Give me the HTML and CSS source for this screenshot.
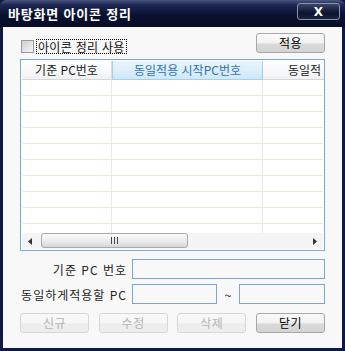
FILE: index.html
```html
<!DOCTYPE html>
<html lang="ko">
<head>
  <meta charset="UTF-8">
  <title>바탕화면 아이콘 정리</title>
  <link rel="stylesheet" href="styles.css">
</head>
<body>
  <div class="window">
    <div class="titlebar">
      <span class="title">바탕화면 아이콘 정리</span>
      <button class="close">X</button>
    </div>

    <div class="client">
      <div class="top-row">
        <label class="check">
          <span class="box"></span>
          <span class="check-text">아이콘 정리 사용</span>
        </label>
        <button class="btn">적용</button>
      </div>

      <div class="list">
        <div class="list-head">
          <div class="col c1">기준 PC번호</div>
          <div class="col c2 active">동일적용 시작PC번호</div>
          <div class="col c3">동일적</div>
        </div>
        <div class="list-body">
          <div class="row"><div class="cell c1"></div><div class="cell c2"></div><div class="cell c3"></div></div>
          <div class="row"><div class="cell c1"></div><div class="cell c2"></div><div class="cell c3"></div></div>
          <div class="row"><div class="cell c1"></div><div class="cell c2"></div><div class="cell c3"></div></div>
          <div class="row"><div class="cell c1"></div><div class="cell c2"></div><div class="cell c3"></div></div>
          <div class="row"><div class="cell c1"></div><div class="cell c2"></div><div class="cell c3"></div></div>
          <div class="row"><div class="cell c1"></div><div class="cell c2"></div><div class="cell c3"></div></div>
          <div class="row"><div class="cell c1"></div><div class="cell c2"></div><div class="cell c3"></div></div>
          <div class="row"><div class="cell c1"></div><div class="cell c2"></div><div class="cell c3"></div></div>
          <div class="row"><div class="cell c1"></div><div class="cell c2"></div><div class="cell c3"></div></div>
          <div class="row"><div class="cell c1"></div><div class="cell c2"></div><div class="cell c3"></div></div>
        </div>
        <div class="hscroll">
          <div class="arrow">
            <svg width="4" height="7" viewBox="0 0 4 7"><path d="M4 0 L0 3.5 L4 7 Z" fill="#333"/></svg>
          </div>
          <div class="track">
            <div class="thumb">
              <svg width="7" height="7" viewBox="0 0 7 7"><path d="M0.5 0 V7 M3.5 0 V7 M6.5 0 V7" stroke="#444" stroke-width="1"/></svg>
            </div>
          </div>
          <div class="arrow">
            <svg width="4" height="7" viewBox="0 0 4 7"><path d="M0 0 L4 3.5 L0 7 Z" fill="#333"/></svg>
          </div>
        </div>
      </div>

      <div class="form-row">
        <span class="label">기준 PC 번호</span>
        <input class="field wide" type="text">
      </div>
      <div class="form-row">
        <span class="label">동일하게적용할 PC</span>
        <input class="field half" type="text">
        <span class="tilde">~</span>
        <input class="field half2" type="text">
      </div>

      <div class="buttons">
        <button class="btn" disabled>신규</button>
        <button class="btn" disabled>수정</button>
        <button class="btn" disabled>삭제</button>
        <button class="btn">닫기</button>
      </div>
    </div>
  </div>
</body>
</html>
```

FILE: styles.css
```css
body {
  margin: 0;
  font-family: "Noto Sans CJK KR", "Noto Sans", sans-serif;
  font-size: 12px;
  color: #111;
}
.window {
  width: 345px;
  height: 351px;
  box-sizing: border-box;
  background-color: #0e1842;
  padding: 0 3px 3px;
  display: flex;
  flex-direction: column;
}
.titlebar {
  height: 27px;
  margin: 0 -3px;
  padding: 0 5px 0 8px;
  display: flex;
  justify-content: space-between;
  align-items: flex-start;
  background: linear-gradient(#4a5780 0, #1c2754 18%, #0a1232 55%, #060c24 100%);
  border-radius: 6px 6px 0 0;
}
.title {
  color: #fff;
  font-weight: bold;
  font-size: 13px;
  line-height: 27px;
  letter-spacing: 0.8px;
}
.close {
  margin-top: 3px;
  width: 43px;
  height: 17px;
  padding: 0;
  border: 1px solid #8a93ad;
  border-radius: 3px;
  background: linear-gradient(#3a4566, #0d1430 60%, #1a2344);
  color: #fff;
  font-family: "DejaVu Sans", sans-serif;
  font-weight: bold;
  font-size: 12px;
  line-height: 14px;
}
.client {
  flex: 1;
  background-color: #f8f8f8;
  padding: 6px 17px 0;
}
.top-row {
  display: flex;
  justify-content: space-between;
  align-items: center;
  height: 20px;
}
.check {
  display: flex;
  align-items: center;
  margin-top: 6px;
}
.box {
  width: 11px;
  height: 11px;
  margin-left: 1px;
  border: 1px solid #9a9a9a;
  background: linear-gradient(135deg, #cfcfcf, #f4f4f4);
}
.check-text {
  margin-left: 2px;
  padding: 0 1px;
  line-height: 13px;
  border: 1px dotted #000;
  letter-spacing: 0.3px;
}
.btn {
  width: 69px;
  height: 20px;
  padding: 0;
  border: 1px solid #a7a7a7;
  border-radius: 3px;
  background: linear-gradient(#fafafa 0, #f2f2f2 50%, #d9d9d9 55%, #d4d4d4 100%);
  font-family: "Noto Sans CJK KR", sans-serif;
  font-size: 12px;
  line-height: 16px;
  color: #000;
  letter-spacing: 0.5px;
}
.btn:disabled {
  border-color: #d6d6d6;
  color: #b4b4b4;
  background: linear-gradient(#f8f8f8 0, #f6f6f6 50%, #ededed 55%, #ededed 100%);
}
.list {
  margin-top: 6px;
  height: 192px;
  box-sizing: border-box;
  border: 1px solid #7aa7d9;
  background: #fff;
  padding: 1px;
  display: flex;
  flex-direction: column;
  overflow: hidden;
}
.list-head,
.row {
  display: flex;
}
.list-head {
  height: 19px;
}
.col {
  box-sizing: border-box;
  height: 19px;
  line-height: 18px;
  text-align: center;
  white-space: nowrap;
  overflow: hidden;
  color: #1a1a1a;
  background: linear-gradient(#ffffff, #f0f1f3);
  border-right: 1px solid #dcdcdc;
  border-bottom: 1px solid #d4d6d9;
}
.col.active {
  color: #2f6fb3;
  background: linear-gradient(#e9f5fd, #cfe8f6);
  border: 1px solid #a5d0ec;
  border-top: none;
}
.c1 { width: 90px; flex: none; }
.c2 { width: 151px; flex: none; }
.c3 { width: 150px; flex: none; }
.col.c3 {
  text-align: left;
  padding-left: 25px;
  border-right: none;
}
.list-body {
  flex: 1;
  overflow: hidden;
}
.row {
  height: 16px;
}
.cell {
  box-sizing: border-box;
  height: 16px;
  border-right: 1px solid #ebe8d8;
  border-bottom: 1px solid #ebe8d8;
}
.hscroll {
  height: 16px;
  display: flex;
  background: #f4f4f4;
}
.arrow {
  width: 16px;
  display: flex;
  align-items: center;
  justify-content: center;
}
.track {
  flex: 1;
  padding: 0 1px 0 3px;
}
.thumb {
  width: 147px;
  height: 15px;
  box-sizing: border-box;
  border: 1px solid #a9a9a9;
  border-radius: 3px;
  background: linear-gradient(#fbfbfb, #e9e9e9 60%, #d6d6d6);
  display: flex;
  align-items: center;
  justify-content: center;
}
.form-row {
  display: flex;
  align-items: center;
  margin-top: 8px;
  height: 20px;
}
.form-row + .form-row {
  margin-top: 5px;
}
.label {
  width: 107px;
  flex: none;
  text-align: right;
  margin-right: 5px;
  white-space: nowrap;
  font-size: 12px;
  letter-spacing: 1px;
  color: #222;
}
.field {
  box-sizing: border-box;
  height: 20px;
  border: 1px solid #7ea3cf;
  background: #f8f8f8;
  margin: 0;
  flex: none;
}
.wide { width: 193px; }
.half { width: 85px; }
.half2 { width: 86px; }
.tilde {
  width: 22px;
  flex: none;
  text-align: center;
  font-size: 12px;
}
.buttons {
  display: flex;
  justify-content: space-between;
  margin-top: 9px;
}
```
